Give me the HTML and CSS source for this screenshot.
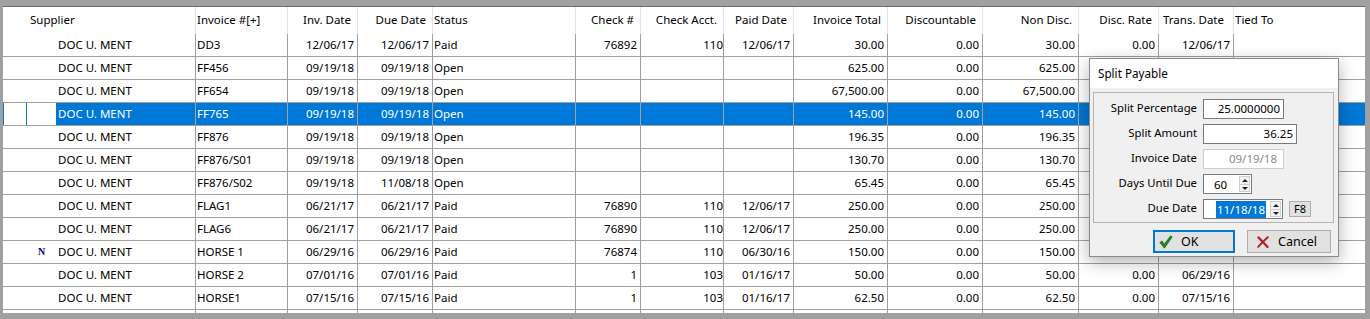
FILE: index.html
```html
<!DOCTYPE html>
<html lang="en">
<head>
    <meta charset="UTF-8">
    <title>Payables</title>
    <link rel="stylesheet" href="styles.css">
</head>
<body>
    <div class="grid">
        <!-- En-tête -->
        <div class="head">
            <div class="hc"></div>
            <div class="hc left sup">Supplier</div>
            <div class="hc left">Invoice #[+]</div>
            <div class="hc">Inv. Date</div>
            <div class="hc">Due Date</div>
            <div class="hc left">Status</div>
            <div class="hc">Check #</div>
            <div class="hc">Check Acct.</div>
            <div class="hc">Paid Date</div>
            <div class="hc">Invoice Total</div>
            <div class="hc">Discountable</div>
            <div class="hc">Non Disc.</div>
            <div class="hc">Disc. Rate</div>
            <div class="hc trans">Trans. Date</div>
            <div class="hc left">Tied To</div>
        </div>

        <div class="row"><div class="ind"></div><div class="mk"></div><div class="c l">DOC U. MENT</div><div class="c l">DD3</div><div class="c">12/06/17</div><div class="c">12/06/17</div><div class="c l">Paid</div><div class="c">76892</div><div class="c acct">110</div><div class="c">12/06/17</div><div class="c">30.00</div><div class="c">0.00</div><div class="c">30.00</div><div class="c">0.00</div><div class="c">12/06/17</div><div class="c l"></div></div>
        <div class="row"><div class="ind"></div><div class="mk"></div><div class="c l">DOC U. MENT</div><div class="c l">FF456</div><div class="c">09/19/18</div><div class="c">09/19/18</div><div class="c l">Open</div><div class="c"></div><div class="c acct"></div><div class="c"></div><div class="c">625.00</div><div class="c">0.00</div><div class="c">625.00</div><div class="c"></div><div class="c"></div><div class="c l"></div></div>
        <div class="row"><div class="ind"></div><div class="mk"></div><div class="c l">DOC U. MENT</div><div class="c l">FF654</div><div class="c">09/19/18</div><div class="c">09/19/18</div><div class="c l">Open</div><div class="c"></div><div class="c acct"></div><div class="c"></div><div class="c">67,500.00</div><div class="c">0.00</div><div class="c">67,500.00</div><div class="c"></div><div class="c"></div><div class="c l"></div></div>
        <div class="row selected"><div class="ind"></div><div class="mk"></div><div class="c l">DOC U. MENT</div><div class="c l">FF765</div><div class="c">09/19/18</div><div class="c">09/19/18</div><div class="c l">Open</div><div class="c"></div><div class="c acct"></div><div class="c"></div><div class="c">145.00</div><div class="c">0.00</div><div class="c">145.00</div><div class="c"></div><div class="c"></div><div class="c l"></div></div>
        <div class="row"><div class="ind"></div><div class="mk"></div><div class="c l">DOC U. MENT</div><div class="c l">FF876</div><div class="c">09/19/18</div><div class="c">09/19/18</div><div class="c l">Open</div><div class="c"></div><div class="c acct"></div><div class="c"></div><div class="c">196.35</div><div class="c">0.00</div><div class="c">196.35</div><div class="c"></div><div class="c"></div><div class="c l"></div></div>
        <div class="row"><div class="ind"></div><div class="mk"></div><div class="c l">DOC U. MENT</div><div class="c l">FF876/S01</div><div class="c">09/19/18</div><div class="c">09/19/18</div><div class="c l">Open</div><div class="c"></div><div class="c acct"></div><div class="c"></div><div class="c">130.70</div><div class="c">0.00</div><div class="c">130.70</div><div class="c"></div><div class="c"></div><div class="c l"></div></div>
        <div class="row"><div class="ind"></div><div class="mk"></div><div class="c l">DOC U. MENT</div><div class="c l">FF876/S02</div><div class="c">09/19/18</div><div class="c">11/08/18</div><div class="c l">Open</div><div class="c"></div><div class="c acct"></div><div class="c"></div><div class="c">65.45</div><div class="c">0.00</div><div class="c">65.45</div><div class="c"></div><div class="c"></div><div class="c l"></div></div>
        <div class="row"><div class="ind"></div><div class="mk"></div><div class="c l">DOC U. MENT</div><div class="c l">FLAG1</div><div class="c">06/21/17</div><div class="c">06/21/17</div><div class="c l">Paid</div><div class="c">76890</div><div class="c acct">110</div><div class="c">12/06/17</div><div class="c">250.00</div><div class="c">0.00</div><div class="c">250.00</div><div class="c"></div><div class="c"></div><div class="c l"></div></div>
        <div class="row"><div class="ind"></div><div class="mk"></div><div class="c l">DOC U. MENT</div><div class="c l">FLAG6</div><div class="c">06/21/17</div><div class="c">06/21/17</div><div class="c l">Paid</div><div class="c">76890</div><div class="c acct">110</div><div class="c">12/06/17</div><div class="c">250.00</div><div class="c">0.00</div><div class="c">250.00</div><div class="c"></div><div class="c"></div><div class="c l"></div></div>
        <div class="row"><div class="ind"></div><div class="mk">N</div><div class="c l">DOC U. MENT</div><div class="c l">HORSE 1</div><div class="c">06/29/16</div><div class="c">06/29/16</div><div class="c l">Paid</div><div class="c">76874</div><div class="c acct">110</div><div class="c">06/30/16</div><div class="c">150.00</div><div class="c">0.00</div><div class="c">150.00</div><div class="c"></div><div class="c"></div><div class="c l"></div></div>
        <div class="row"><div class="ind"></div><div class="mk"></div><div class="c l">DOC U. MENT</div><div class="c l">HORSE 2</div><div class="c">07/01/16</div><div class="c">07/01/16</div><div class="c l">Paid</div><div class="c">1</div><div class="c acct">103</div><div class="c">01/16/17</div><div class="c">50.00</div><div class="c">0.00</div><div class="c">50.00</div><div class="c">0.00</div><div class="c">06/29/16</div><div class="c l"></div></div>
        <div class="row"><div class="ind"></div><div class="mk"></div><div class="c l">DOC U. MENT</div><div class="c l">HORSE1</div><div class="c">07/15/16</div><div class="c">07/15/16</div><div class="c l">Paid</div><div class="c">1</div><div class="c acct">103</div><div class="c">01/16/17</div><div class="c">62.50</div><div class="c">0.00</div><div class="c">62.50</div><div class="c">0.00</div><div class="c">07/15/16</div><div class="c l"></div></div>
        <div class="row"><div class="ind"></div><div class="mk"></div><div class="c l"></div><div class="c l"></div><div class="c"></div><div class="c"></div><div class="c l"></div><div class="c"></div><div class="c acct"></div><div class="c"></div><div class="c"></div><div class="c"></div><div class="c"></div><div class="c"></div><div class="c"></div><div class="c l"></div></div>
    </div>

    <!-- Fenêtre Split Payable -->
    <div class="dialog">
        <div class="dlg-title">Split Payable</div>
        <div class="group">
            <div class="lbl">Split Percentage</div>
            <div><div class="box w81">25.0000000</div></div>

            <div class="lbl">Split Amount</div>
            <div><div class="box w94">36.25</div></div>

            <div class="lbl">Invoice Date</div>
            <div><div class="box w81 disabled">09/19/18</div></div>

            <div class="lbl">Days Until Due</div>
            <div>
                <div class="box spin w49">
                    <span class="val center">60</span>
                    <span class="spinner">
                        <span class="up"></span>
                        <span class="down"></span>
                    </span>
                </div>
            </div>

            <div class="lbl">Due Date</div>
            <div class="line">
                <div class="box spin w80">
                    <span class="val"><span class="sel">11/18/18</span></span>
                    <span class="spinner">
                        <span class="up"></span>
                        <span class="down"></span>
                    </span>
                </div>
                <div class="f8">F8</div>
            </div>
        </div>
        <div class="buttons">
            <div class="btn default">
                <svg width="14" height="14" viewBox="0 0 14 14"><path d="M0.8 7.6 L3.2 5.9 L5.2 9.2 L11.6 0.8 L13.2 2 L5.4 13.2 Z" fill="#1e8c1e" stroke="#0e5a0e" stroke-width="0.6"/></svg>
                <span>OK</span>
            </div>
            <div class="btn">
                <svg width="12" height="12" viewBox="0 0 12 12"><path d="M1.5 1.5 C4 4 7 7.5 10.5 10.8" stroke="#b8232a" stroke-width="2.4" fill="none" stroke-linecap="round"/><path d="M10.8 1.2 C7.5 4 4 7.5 1.2 10.8" stroke="#b8232a" stroke-width="2" fill="none" stroke-linecap="round"/></svg>
                <span>Cancel</span>
            </div>
        </div>
    </div>
</body>
</html>
```

FILE: styles.css
```css
/* Style général */
body {
    margin: 0;
    padding: 0;
    height: 319px;
    overflow: hidden;
    background-color: #a0a0a0;
    font-family: "Noto Sans", Arial, sans-serif;
    font-size: 11.5px;
    color: #000;
}

.grid {
    margin: 6px 0 0 3px;
    width: 1362px;
    height: 306px;
    border-top: 1px solid #6a6a6a;
    background: #fff;
    overflow: hidden;
}

.head, .row {
    display: grid;
    grid-template-columns: 24px 29px 140px 92px 70px 75px 143px 65px 83px 70px 94px 95px 96px 80px 75px 131px;
}

/* En-tête */
.head {
    height: 27px;
}

.hc {
    box-sizing: border-box;
    border-right: 1px solid #e3e3e3;
    text-align: right;
    padding: 5px 6px 0 0;
    white-space: nowrap;
}

.hc:first-child {
    border-right: none;
}

.hc.left {
    text-align: left;
    padding-left: 1px;
}

.hc.sup {
    grid-column: span 2;
    padding-left: 3px;
}

.hc.trans {
    padding-right: 9px;
}

.hc:last-child {
    border-right: none;
}

/* Lignes */
.row {
    height: 23px;
    box-sizing: border-box;
    border-bottom: 1px solid #a0a0a0;
}

.c {
    box-sizing: border-box;
    border-right: 1px solid #a0a0a0;
    text-align: right;
    padding: 3px 3px 0 0;
    white-space: nowrap;
    overflow: hidden;
}

.c.l {
    text-align: left;
    padding-left: 1px;
}

.row .c:nth-child(3) {
    padding-left: 2px;
}

.c.acct {
    padding-right: 0;
}

.c:last-child {
    border-right: none;
}

.mk {
    text-align: center;
    font-family: "Liberation Serif", serif;
    font-weight: bold;
    font-size: 10px;
    color: #000080;
    padding-top: 5px;
}

.row.selected .c {
    background-color: #0078d7;
    color: #fff;
}

.row.selected .ind {
    box-sizing: border-box;
    border-left: 1px solid #0078d7;
    border-right: 1px solid #0078d7;
}

/* Fenêtre */
.dialog {
    position: absolute;
    left: 1089px;
    top: 58px;
    width: 250px;
    height: 199px;
    box-sizing: border-box;
    border: 1px solid #8a8a8a;
    background-color: #f0f0f0;
    box-shadow: 0 5px 16px rgba(0, 0, 0, 0.3);
    font-size: 11.3px;
}

.dlg-title {
    background: #fff;
    height: 29px;
    padding: 6px 0 0 8px;
    box-sizing: border-box;
    font-size: 11.7px;
}

.group {
    margin: 4px 4px 0 3px;
    height: 131px;
    box-sizing: border-box;
    border: 1px solid #b4b4b4;
    display: grid;
    grid-template-columns: 103px auto;
    column-gap: 6px;
    row-gap: 5px;
    grid-auto-rows: 20px;
    padding-top: 6px;
}

.lbl {
    text-align: right;
    padding-top: 1px;
    white-space: nowrap;
}

.line {
    display: flex;
    align-items: center;
    gap: 6px;
}

.box {
    box-sizing: border-box;
    height: 20px;
    background: #fff;
    border: 1px solid #7a7a7a;
    text-align: right;
    padding: 1px 3px 0 0;
    font-size: 11.5px;
}

.box.disabled {
    border-color: #cccccc;
    color: #8a8a8a;
    padding-right: 6px;
}

.w81 { width: 81px; }
.w94 { width: 94px; }
.w49 { width: 49px; }
.w80 { width: 80px; }

.box.spin {
    display: flex;
    padding: 0 1px 0 0;
    align-items: center;
}

.val {
    flex: 1;
    text-align: right;
    padding-right: 4px;
}

.val.center {
    text-align: left;
    padding-left: 10px;
}

.sel {
    background-color: #0078d7;
    color: #fff;
    padding: 1px 1px;
}

.spinner {
    width: 11px;
    height: 16px;
    display: flex;
    flex-direction: column;
    border: 1px solid #cfcfcf;
    box-sizing: border-box;
    background: #f4f4f4;
}

.spinner span {
    flex: 1;
    position: relative;
}

.spinner .up {
    border-bottom: 1px solid #cfcfcf;
}

.spinner .up::after,
.spinner .down::after {
    content: "";
    position: absolute;
    left: 2px;
    border-left: 3px solid transparent;
    border-right: 3px solid transparent;
}

.spinner .up::after {
    top: 2px;
    border-bottom: 3px solid #202020;
}

.spinner .down::after {
    top: 2px;
    border-top: 3px solid #202020;
}

.f8 {
    width: 22px;
    height: 16px;
    box-sizing: border-box;
    border: 1px solid #adadad;
    background: #e1e1e1;
    text-align: center;
    font-size: 11px;
    line-height: 14px;
}

.buttons {
    display: flex;
    justify-content: flex-end;
    gap: 12px;
    padding: 7px 7px 0 0;
}

.btn {
    width: 82px;
    height: 23px;
    box-sizing: border-box;
    border: 1px solid #adadad;
    background: #e1e1e1;
    display: flex;
    align-items: center;
    gap: 9px;
    padding-left: 9px;
    font-size: 12.5px;
}

.btn.default {
    border: 2px solid #0078d7;
    padding-left: 4px;
    gap: 8px;
}

.btn:last-child {
    width: 84px;
}
```
